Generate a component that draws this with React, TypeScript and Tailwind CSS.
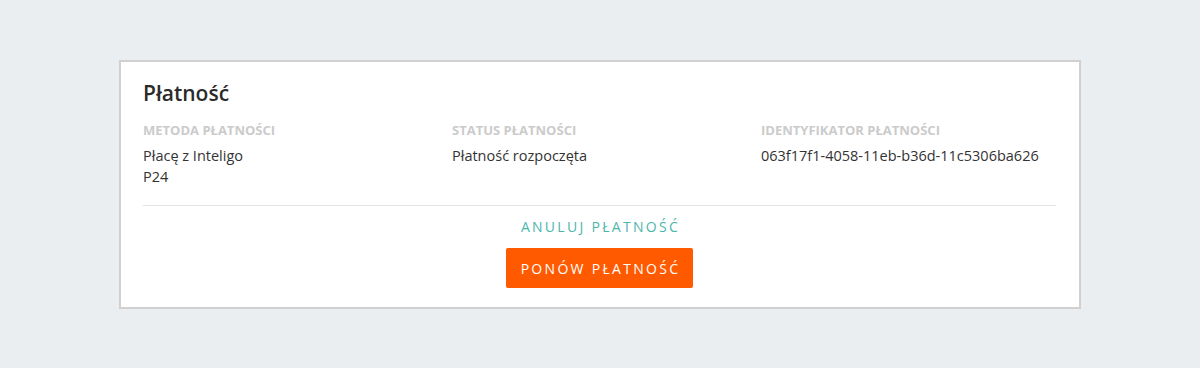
export default function App() {
  return (
    <div
      className="min-h-[368px] w-full bg-[#ebeef1] flex justify-center pt-[60px]"
      style={{ fontFamily: '"Open Sans", "Noto Sans", sans-serif' }}
    >
      <div className="w-[962px] h-[249px] bg-white border-2 border-[#d0d0d0] pl-[22px] pr-[23px] pt-[17px]">
        <h2 className="text-[21px] leading-[28px] font-semibold text-[#2b2b2b]">Płatność</h2>
        <div className="grid grid-cols-3 gap-x-[14px] mt-[15px]">
          <div>
            <div className="text-[13px] leading-[16px] font-bold text-[#cbcbcb] uppercase">Metoda płatności</div>
            <div className="mt-[7px] text-[14.5px] leading-[21px] text-[#333]">
              <div>Płacę z Inteligo</div>
              <div>P24</div>
            </div>
          </div>
          <div>
            <div className="text-[13px] leading-[16px] font-bold text-[#cbcbcb] uppercase">Status płatności</div>
            <div className="mt-[7px] text-[14.5px] leading-[21px] text-[#333]">Płatność rozpoczęta</div>
          </div>
          <div>
            <div className="text-[13px] leading-[16px] font-bold text-[#cbcbcb] uppercase">Identyfikator płatności</div>
            <div className="mt-[7px] text-[14.5px] leading-[21px] text-[#333]">063f17f1-4058-11eb-b36d-11c5306ba626</div>
          </div>
        </div>
        <div className="mt-[18px] border-t border-[#e3e3e3]" />
        <div className="flex flex-col items-center">
          <button className="mt-[11px] pl-[2px] text-[14px] leading-[20px] tracking-[2.3px] text-[#4db6ac] uppercase">
            Anuluj płatność
          </button>
          <button className="mt-[11px] h-[40px] w-[187px] pl-[2px] rounded-[2px] bg-[#ff5a00] text-white text-[14px] tracking-[2.3px] uppercase">
            Ponów płatność
          </button>
        </div>
      </div>
    </div>
  );
}
